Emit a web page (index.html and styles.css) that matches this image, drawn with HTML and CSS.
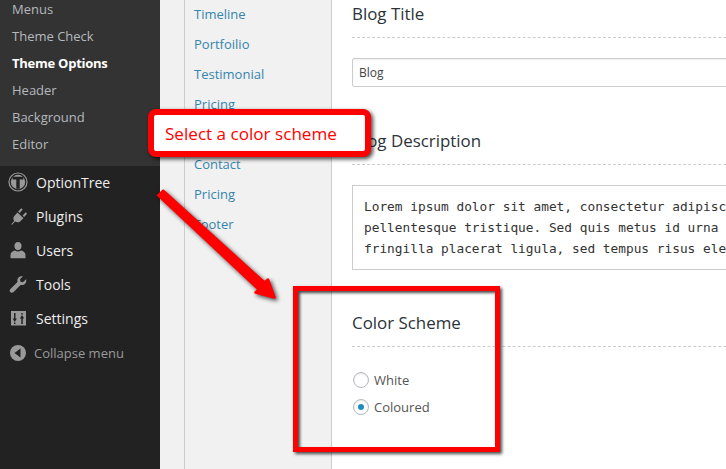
FILE: index.html
```html
<!DOCTYPE html>
<html lang="en">
<head>
<meta charset="utf-8">
<title>Theme Options</title>
<link rel="stylesheet" href="styles.css">
</head>
<body>
<div class="page">
  <aside class="sidebar">
    <ul class="submenu">
      <li>Menus</li>
      <li>Theme Check</li>
      <li class="current">Theme Options</li>
      <li>Header</li>
      <li>Background</li>
      <li>Editor</li>
    </ul>
    <ul class="menu">
      <li>
        <svg class="icon" viewBox="0 0 20 20"><circle cx="10" cy="10" r="9" fill="none" stroke="#999" stroke-width="1.2"/><circle cx="10" cy="10" r="7.2" fill="#999"/><path d="M4.6 4.8h10.8v2.6h-3.7v9.4H8.3V7.4H4.6z" fill="#222"/></svg>
        <span>OptionTree</span>
      </li>
      <li>
        <svg class="icon" viewBox="0 0 20 20"><path fill="#999" d="M3 18.500l3.200-3.400c-1.200-2-.9-3.700.1-5.100l3.200-3.400 6 5.600-3.400 3.200c-1.400 1.100-3.200 1.200-5 .2l-2.700 3zM10.200 5.600l3-3.400 1.500 1.400-3 3.400zM14.600 9.700l3-3.400 1.500 1.400-3 3.400z"/></svg>
        <span>Plugins</span>
      </li>
      <li>
        <svg class="icon" viewBox="0 0 20 20"><path fill="#999" d="M10 2c2.400 0 3.600 1.900 3.600 4s-1.400 4.200-3.600 4.200S6.400 8.100 6.400 6 7.600 2 10 2zM2.500 15c0-2.500 2.200-4 4.500-4.500 1.800 1.300 4.200 1.300 6 0 2.300.5 4.500 2 4.500 4.500v3.200h-15z"/></svg>
        <span>Users</span>
      </li>
      <li>
        <svg class="icon" viewBox="0 0 20 20"><path fill="#999" d="M18.200 5.200c.4 1.900-.1 3.600-1.300 4.700-1.200 1.100-2.800 1.400-4.300 1L5.600 18c-1 1-2.400 1-3.300.1s-.8-2.300.1-3.200l7.100-7c-.4-1.500-.1-3.200 1-4.300C11.700 2.400 13.400 2 15 2.300l-3 3 .5 2.400 2.400.6z"/></svg>
        <span>Tools</span>
      </li>
      <li>
        <svg class="icon" viewBox="0 0 20 20"><path fill="#999" fill-rule="evenodd" d="M3 3h15v14.500H3zM6 5v5.500H4.600L6.700 14l2.200-3.500H7.500V5zM6 14.500v1.500h1.500v-1.500zM13.300 16v-5.500H11.900L14 7l2.200 3.500h-1.400V16zM13.300 6.500V5h1.500v1.500z"/></svg>
        <span>Settings</span>
      </li>
      <li class="collapse">
        <svg class="icon" viewBox="0 0 20 20"><circle cx="10" cy="10" r="8" fill="#999"/><path d="M12.500 5.500v9L6.500 10z" fill="#222"/></svg>
        <span>Collapse menu</span>
      </li>
    </ul>
  </aside>

  <div class="workspace">
    <nav class="tabs">
      <a>Timeline</a>
      <a>Portfoilio</a>
      <a>Testimonial</a>
      <a>Pricing</a>
      <a>Team</a>
      <a>Contact</a>
      <a>Pricing</a>
      <a>Footer</a>
    </nav>
    <main class="panel">
      <section class="field field-title">
        <h2>Blog Title</h2>
        <div class="text-input">Blog</div>
      </section>
      <section class="field field-desc">
        <h2>Blog Description</h2>
        <div class="text-area">
          <div>Lorem ipsum dolor sit amet, consectetur adipiscing elit. Nulla</div>
          <div>pellentesque tristique. Sed quis metus id urna rhoncus</div>
          <div>fringilla placerat ligula, sed tempus risus elementum</div>
        </div>
      </section>
      <section class="field field-color">
        <h2>Color Scheme</h2>
        <div class="radios">
          <div class="radio-row"><span class="radio"></span><span>White</span></div>
          <div class="radio-row"><span class="radio checked"></span><span>Coloured</span></div>
        </div>
      </section>
    </main>
  </div>

  <div class="callout">Select a color scheme</div>
  <svg class="arrow" viewBox="0 0 140 130" width="140" height="130"><path d="M3.200 9.300 L8.200 4.700 L109.500 96.500 L113 93.500 L119.500 111.500 L100.500 106.500 L103.800 103.500 Z" fill="#f00" stroke="#f00" stroke-width="2.500" stroke-linejoin="round"/></svg>
  <div class="highlight"></div>
</div>
</body>
</html>
```

FILE: styles.css
```css
* { box-sizing: border-box; }
html, body { margin: 0; padding: 0; height: 100%; }
body { overflow: hidden; font-family: "Open Sans", "Liberation Sans", sans-serif; font-size: 13px; color: #444; }
ul { list-style: none; margin: 0; padding: 0; }

.page { position: relative; display: flex; width: 726px; height: 469px; overflow: hidden; background: #f1f1f1; }

.sidebar { flex: 0 0 160px; background: #222; display: flex; flex-direction: column; }
.submenu { flex: 0 0 166px; background: #333; overflow: hidden; }
.submenu li { height: 27px; padding-left: 12px; line-height: 27px; color: #b4b9be; transform: translateY(-4px); }
.submenu .current { color: #fff; font-weight: 700; letter-spacing: -.25px; }

.menu { margin-top: -1px; }
.menu li { display: flex; align-items: center; height: 34px; padding-left: 8px; font-size: 14px; color: #eee; }
.menu .icon { flex: 0 0 20px; width: 20px; height: 20px; margin-right: 8px; }
.menu .collapse { font-size: 13px; color: #999; padding-top: 1px; }
.menu .collapse .icon { margin-right: 6px; }

.workspace { flex: 1; display: flex; margin-left: 24px; min-width: 0; }
.tabs { flex: 0 0 148px; border-left: 1px solid #ccc; border-right: 1px solid #ccc; background: #f1f1f1; padding-left: 9px; display: flex; flex-direction: column; }
.tabs a { display: block; height: 30px; line-height: 30px; color: #3585ad; transform: translateY(-1px); }

.panel { flex: 1; display: flex; flex-direction: column; background: #fff; padding-left: 20px; min-width: 0; overflow: hidden; }
.field { flex: none; width: 560px; }
.field h2 { margin: 0; height: 38px; border-bottom: 1px dashed #ccc; font-size: 16.900px; font-weight: 400; line-height: 28px; color: #2c3338; white-space: nowrap; }
.field-title { height: 127px; }
.field-desc { height: 182px; }

.text-input { margin-top: 20px; height: 29px; border: 1px solid #ccc; border-radius: 2px; padding-left: 6px; line-height: 28px; font-size: 12px; color: #444; box-shadow: inset 0 1px 2px rgba(0,0,0,.07); }
.text-area { margin-top: 20px; height: 85px; border: 1px solid #ccc; padding: 10px 11px; font-family: "DejaVu Sans Mono", "Liberation Mono", monospace; font-size: 12.8px; line-height: 21px; color: #333; white-space: nowrap; overflow: hidden; }

.radios { margin-top: 25px; display: flex; flex-direction: column; gap: 11px; }
.radio-row { display: flex; align-items: center; gap: 5px; height: 16px; font-size: 13px; color: #555; }
.radio { width: 16px; height: 16px; margin-left: 1px; border: 1px solid #b4b9be; border-radius: 50%; background: #fff; box-shadow: inset 0 1px 2px rgba(0,0,0,.1); display: flex; align-items: center; justify-content: center; }
.radio.checked::before { content: ""; width: 6px; height: 6px; border-radius: 50%; background: #1e8cbe; }

.callout { position: absolute; left: 148px; top: 109px; width: 223px; height: 48px; background: #fff; border: 6px solid #f00; border-radius: 8px; box-shadow: 2px 2px 4px rgba(0,0,0,.75); padding-left: 11px; line-height: 37px; font-size: 17.100px; color: #f00; white-space: nowrap; }
.arrow { position: absolute; left: 155px; top: 186px; overflow: visible; filter: drop-shadow(2px 2px 2px rgba(0,0,0,.7)); }
.highlight { position: absolute; left: 293px; top: 286px; width: 207px; height: 166px; border: 5px solid #f00; box-shadow: 2px 2px 3px rgba(0,0,0,.7), inset 2px 2px 3px rgba(0,0,0,.7); }
```
